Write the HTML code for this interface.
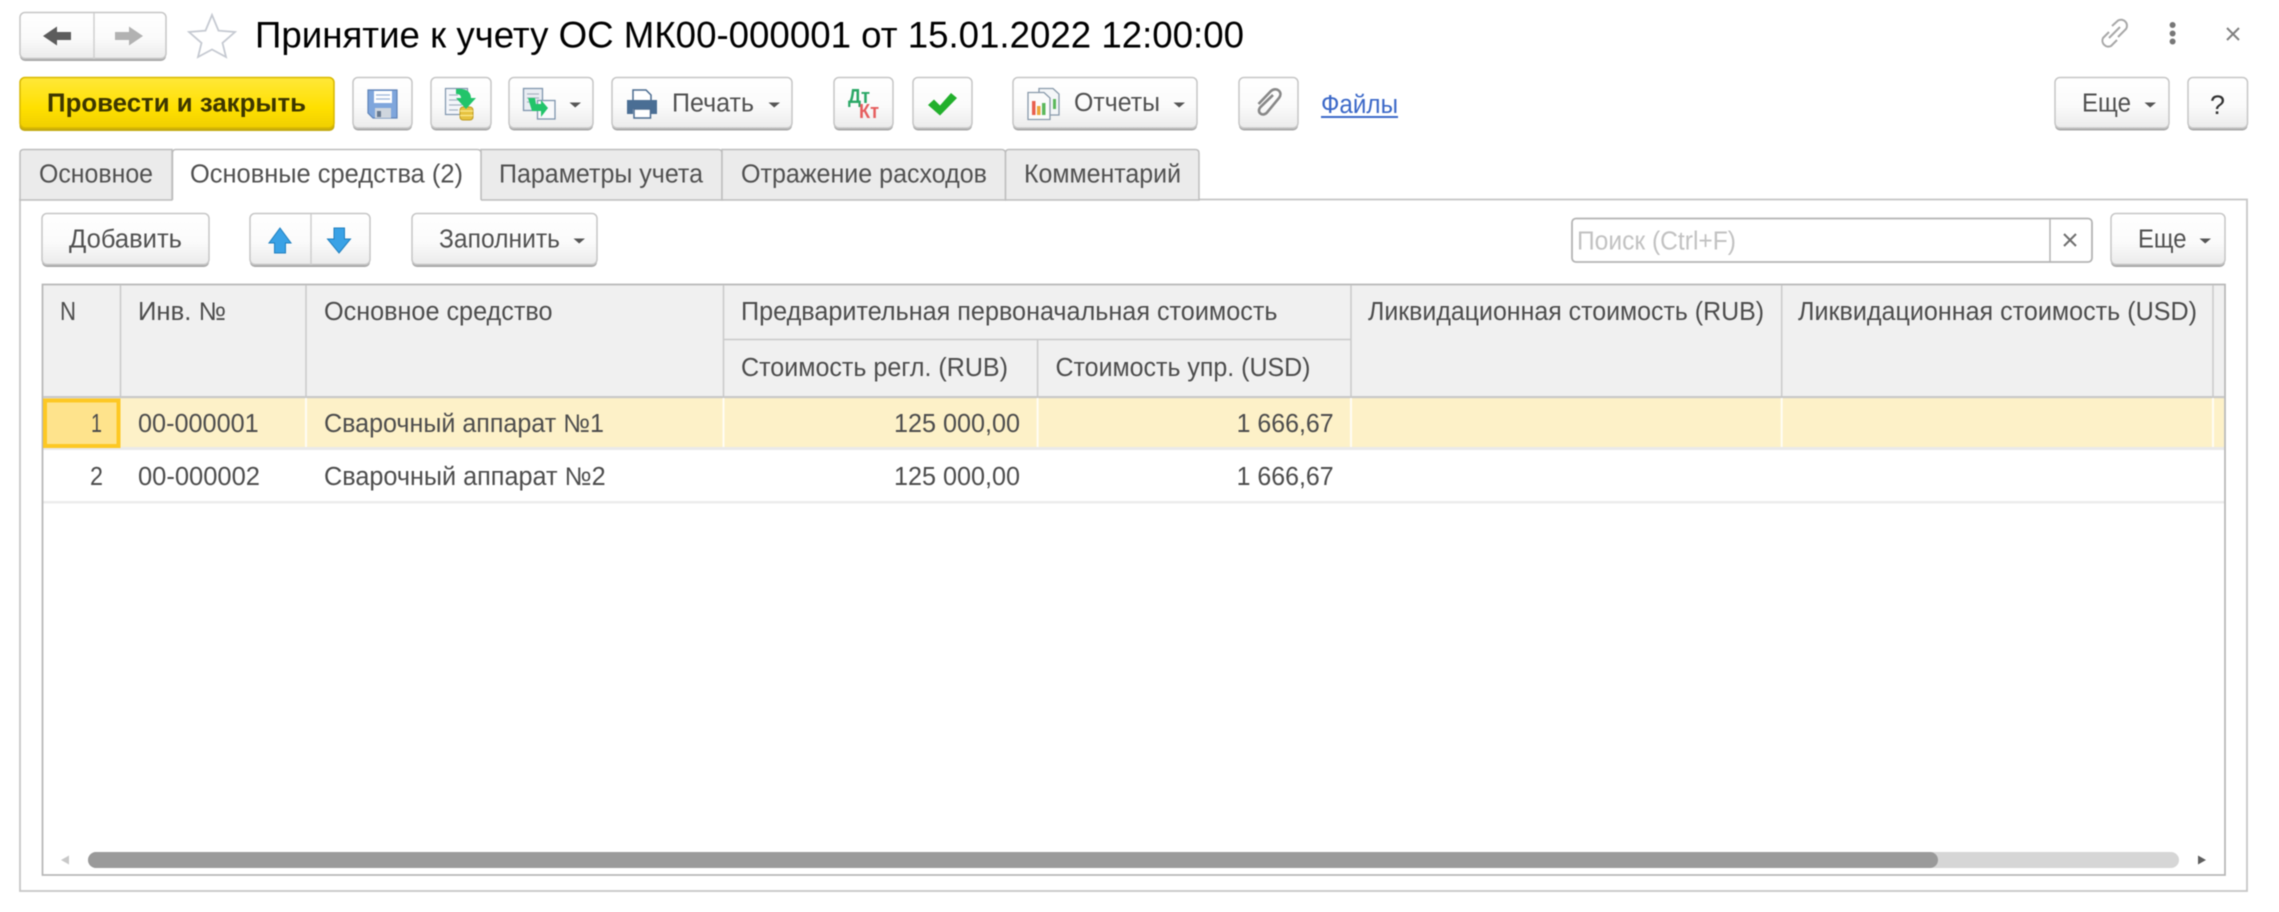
<!DOCTYPE html>
<html lang="ru"><head><meta charset="utf-8"><title>Принятие к учету</title>
<style>
html,body{margin:0;padding:0;background:#fff;width:2279px;height:912px;overflow:hidden}
svg{display:block;filter:blur(.55px)}
text{font-family:"Liberation Sans",sans-serif;fill:#4a4a4a;font-size:25.5px;white-space:pre}
.b{fill:url(#g);stroke:#c6c6c6;stroke-width:1.5}
.s{fill:#a8a8a8}
.t{fill:#505050}
.h{fill:#4c4c4c;font-size:25.5px}
.vl{stroke:#cacaca;stroke-width:1.5}
.wl{stroke:#fffdf5;stroke-width:2}
</style></head><body>
<svg width="2279" height="912" viewBox="0 0 2279 912" xmlns="http://www.w3.org/2000/svg">
<defs>
<linearGradient id="g" x1="0" y1="0" x2="0" y2="1"><stop offset="0" stop-color="#fff"/><stop offset=".55" stop-color="#fbfbfb"/><stop offset="1" stop-color="#ebebeb"/></linearGradient>
<linearGradient id="y" x1="0" y1="0" x2="0" y2="1"><stop offset="0" stop-color="#ffe83a"/><stop offset=".6" stop-color="#ffe000"/><stop offset="1" stop-color="#f0cf00"/></linearGradient>
</defs>
<rect width="2279" height="912" fill="#fff"/>

<!-- nav -->
<rect class="s" x="20" y="14" width="146" height="47" rx="5"/>
<rect class="b" x="20" y="12.5" width="146" height="46" rx="5"/>
<line x1="94" y1="13" x2="94" y2="59" stroke="#d0d0d0" stroke-width="1.5"/>
<path d="M43 36 L57 26.5 V32 H71 V40 H57 V45.5 Z" fill="#5c5c5c"/>
<path d="M143 36 L129 26.5 V32 H115 V40 H129 V45.5 Z" fill="#b2b2b2"/>
<path d="M212 15 L218.5 30.6 L235 32 L222.5 43 L226 57 L212 49.5 L198 57 L201.5 43 L189 32 L205.5 30.6 Z" fill="#fff" stroke="#c6cad2" stroke-width="1.8"/>

<text x="255" y="47.5" textLength="989" lengthAdjust="spacingAndGlyphs" style="font-size:37.5px;fill:#000">Принятие к учету ОС МК00-000001 от 15.01.2022 12:00:00</text>

<!-- top right -->
<g fill="none" stroke="#a8a8a8" stroke-width="2">
<path d="M2112 26 L2118 20.5 A6 6 0 0 1 2126 29 L2118 37"/>
<path d="M2109 32 L2103 38 A6 6 0 0 0 2111 46 L2117 40"/>
<path d="M2109 38 L2120 27"/>
</g>
<circle cx="2172.6" cy="25" r="3" fill="#777"/><circle cx="2172.6" cy="33.5" r="3" fill="#777"/><circle cx="2172.6" cy="41.5" r="3" fill="#777"/>
<path d="M2227 28 L2239 40 M2239 28 L2227 40" stroke="#808080" stroke-width="2"/>

<!-- toolbar -->
<rect x="19.5" y="79" width="315" height="52" rx="5" fill="#c4aa10"/>
<rect x="20" y="77.5" width="314" height="50.5" rx="5" fill="url(#y)" stroke="#d8b800" stroke-width="1.5"/>
<text x="47" y="111.5" textLength="259" lengthAdjust="spacingAndGlyphs" style="font-weight:bold;fill:#3d3600;font-size:26px">Провести и закрыть</text>

<rect class="s" x="353" y="79" width="59" height="51.5" rx="5"/><rect class="b" x="353" y="77.5" width="59" height="50.5" rx="5"/>
<rect class="s" x="431" y="79" width="60" height="51.5" rx="5"/><rect class="b" x="431" y="77.5" width="60" height="50.5" rx="5"/>
<rect class="s" x="509" y="79" width="84" height="51.5" rx="5"/><rect class="b" x="509" y="77.5" width="84" height="50.5" rx="5"/>
<rect class="s" x="612" y="79" width="180" height="51.5" rx="5"/><rect class="b" x="612" y="77.5" width="180" height="50.5" rx="5"/>
<rect class="s" x="834" y="79" width="59" height="51.5" rx="5"/><rect class="b" x="834" y="77.5" width="59" height="50.5" rx="5"/>
<rect class="s" x="913" y="79" width="59" height="51.5" rx="5"/><rect class="b" x="913" y="77.5" width="59" height="50.5" rx="5"/>
<rect class="s" x="1013" y="79" width="184" height="51.5" rx="5"/><rect class="b" x="1013" y="77.5" width="184" height="50.5" rx="5"/>
<rect class="s" x="1239" y="79" width="59" height="51.5" rx="5"/><rect class="b" x="1239" y="77.5" width="59" height="50.5" rx="5"/>
<rect class="s" x="2055" y="79" width="114" height="51.5" rx="5"/><rect class="b" x="2055" y="77.5" width="114" height="50.5" rx="5"/>
<rect class="s" x="2188" y="79" width="59.5" height="51.5" rx="5"/><rect class="b" x="2188" y="77.5" width="59.5" height="50.5" rx="5"/>

<!-- save icon -->
<path d="M368 90 H397 V118 H373 L368 113 Z" fill="#7fa6dc" stroke="#5f84b8" stroke-width="1.2"/>
<rect x="374" y="91" width="18" height="12" fill="#fff"/>
<path d="M376 95 H390 M376 99 H390" stroke="#9ab4d8" stroke-width="1.3"/>
<rect x="375" y="108" width="16" height="10" fill="#cfd6de"/><rect x="377" y="111" width="4" height="6" fill="#66788f"/>

<!-- post icon -->
<rect x="445.5" y="88.5" width="22" height="26" fill="#f4f6fa" stroke="#7f95ad" stroke-width="1.2"/>
<path d="M449 95 H458 M449 100 H462 M449 105 H462 M449 110 H458" stroke="#a8b4c2" stroke-width="1.3"/>
<rect x="460" y="107" width="13" height="13" rx="3" fill="#e6c23f" stroke="#bd9a22"/>
<path d="M460 111 H473 M460 115.500 H473" stroke="#fbe98d" stroke-width="1.3"/>
<path d="M456 89 C465 88 471 91 471 98 H476 L466 109 L456 98 H461 C461 95 459 94 456 94 Z" fill="#22c46a"/>

<!-- copy icon -->
<rect x="523.5" y="88.5" width="19" height="22" fill="#e9edf3" stroke="#7f95ad" stroke-width="1.3"/>
<path d="M527 94 H539 M527 98 H539 M527 102 H533" stroke="#a8b4c2" stroke-width="1.2"/>
<rect x="537.5" y="100.5" width="17.5" height="18.5" fill="#f8f9fb" stroke="#7f95ad" stroke-width="1.3"/>
<path d="M528 98 L535 98 L536 104 L541 104 L541 100 L548 108 L541 117 L541 111 L532 111 Z" fill="#22c46a"/>
<path d="M569.5 102.5 H581 L575.2 107.5 Z" fill="#555"/>

<!-- printer -->
<path d="M633 90 H646 L651 95 V103 H633 Z" fill="#fff" stroke="#4a6b90" stroke-width="1.5"/>
<path d="M627 100 H657 V114 H651 V109 H633 V114 H627 Z" fill="#4a6e94"/>
<rect x="634" y="109" width="16.5" height="9" fill="#fff" stroke="#4a6b90" stroke-width="1.5"/>
<text x="672" y="111.5" textLength="82" lengthAdjust="spacingAndGlyphs" class="t">Печать</text>
<path d="M768.5 102.5 H780 L774.2 107.5 Z" fill="#555"/>

<!-- dt kt -->
<text x="848" y="103" textLength="22" lengthAdjust="spacingAndGlyphs" style="font-size:20px;font-weight:bold;fill:#2aa866">Дт</text>
<text x="859" y="118" textLength="20" lengthAdjust="spacingAndGlyphs" style="font-size:20px;font-weight:bold;fill:#e65e5e">Кт</text>
<!-- check -->
<path d="M928 105 L934 99.5 L940 105.5 L951 93 L957 98 L940 115.5 Z" fill="#22b02c"/>

<!-- reports -->
<path d="M1039 88.5 H1053 L1059 94 V115 H1039 Z" fill="#f4f6f8" stroke="#8899aa" stroke-width="1.3"/>
<path d="M1028 92.5 H1044 L1050 98 V119.5 H1028 Z" fill="#fbfbfb" stroke="#8899aa" stroke-width="1.3"/>
<rect x="1032" y="101" width="3.5" height="14" fill="#e8604e"/><rect x="1037" y="106" width="3.5" height="9" fill="#eda63a"/><rect x="1042" y="103" width="3.5" height="12" fill="#5cb85c"/><rect x="1053" y="99" width="3" height="10" fill="#5cb85c"/>
<text x="1074" y="111" textLength="86" lengthAdjust="spacingAndGlyphs" class="t">Отчеты</text>
<path d="M1173.5 102.5 H1185 L1179.2 107.5 Z" fill="#555"/>

<!-- clip -->
<path d="M1273 95 L1260.5 107 C1256 112 1262.500 117.500 1267 112.500 L1279 98 C1283.500 92 1276.500 86.500 1271 91 L1258.500 104" fill="none" stroke="#888" stroke-width="2.6"/>

<text x="1321" y="113" textLength="77" lengthAdjust="spacingAndGlyphs" style="fill:#3b68c8">Файлы</text>
<rect x="1321" y="116" width="77" height="2" fill="#3b68c8"/>

<text x="2082" y="111.5" textLength="49" lengthAdjust="spacingAndGlyphs" class="t">Еще</text>
<path d="M2144.500 102.500 H2156 L2150.200 107.500 Z" fill="#555"/>
<text x="2210" y="114" textLength="15" lengthAdjust="spacingAndGlyphs" style="fill:#333;font-size:27px">?</text>

<!-- tabs & panel -->
<rect x="20" y="199.500" width="2227" height="691.500" fill="#fff" stroke="#c6c6c6" stroke-width="1.800"/>
<path d="M20 200 V153 Q20 149.500 24 149.500 H172 V200 Z" fill="#ebebeb" stroke="#bdbdbd" stroke-width="1.500"/>
<path d="M481 200 V149.500 H718 Q722 149.500 722 153 V200 Z" fill="#ebebeb" stroke="#bdbdbd" stroke-width="1.500"/>
<path d="M722 200 V149.500 H1001 Q1005.500 149.500 1005.500 153 V200 Z" fill="#ebebeb" stroke="#bdbdbd" stroke-width="1.500"/>
<path d="M1005.500 200 V153 Q1005.500 149.500 1009 149.500 H1195 Q1199 149.500 1199 153 V200 Z" fill="#ebebeb" stroke="#bdbdbd" stroke-width="1.500"/>
<path d="M172.500 202 V153 Q172.500 149.500 176 149.500 H477 Q481 149.500 481 153 V202 Z" fill="#fff"/>
<path d="M172.500 200 V153 Q172.500 149.500 176 149.500 H477 Q481 149.500 481 153 V200" fill="none" stroke="#bdbdbd" stroke-width="1.500"/>
<text x="39" y="182.500" textLength="114" lengthAdjust="spacingAndGlyphs" class="t">Основное</text>
<text x="190" y="182.500" textLength="273" lengthAdjust="spacingAndGlyphs" class="t">Основные средства (2)</text>
<text x="499" y="182.500" textLength="204" lengthAdjust="spacingAndGlyphs" class="t">Параметры учета</text>
<text x="741" y="182.500" textLength="246" lengthAdjust="spacingAndGlyphs" class="t">Отражение расходов</text>
<text x="1024" y="182.500" textLength="157" lengthAdjust="spacingAndGlyphs" class="t">Комментарий</text>

<!-- row 3 buttons -->
<rect class="s" x="42" y="215" width="167" height="52" rx="5"/><rect class="b" x="42" y="213.500" width="167" height="51" rx="5"/>
<text x="69" y="247.500" textLength="113" lengthAdjust="spacingAndGlyphs" class="t">Добавить</text>
<rect class="s" x="250" y="215" width="120" height="52" rx="5"/><rect class="b" x="250" y="213.500" width="120" height="51" rx="5"/>
<line x1="311" y1="214" x2="311" y2="265" stroke="#cfcfcf" stroke-width="1.500"/>
<path d="M280 228 L291 243 H285.500 V253 H274.500 V243 H269 Z" fill="#3aa2e6" stroke="#1f7fbf" stroke-width="1"/>
<path d="M339 253 L350.500 239 H344.500 V228 H334 V239 H327.500 Z" fill="#3aa2e6" stroke="#1f7fbf" stroke-width="1"/>
<rect class="s" x="412" y="215" width="185" height="52" rx="5"/><rect class="b" x="412" y="213.500" width="185" height="51" rx="5"/>
<text x="439" y="247.500" textLength="121" lengthAdjust="spacingAndGlyphs" class="t">Заполнить</text>
<path d="M573.500 238.500 H585 L579.200 243.500 Z" fill="#555"/>

<rect x="1572" y="218.500" width="520" height="43.500" rx="4" fill="#fff" stroke="#b4b4b4" stroke-width="1.800"/>
<line x1="2050" y1="219" x2="2050" y2="262" stroke="#b4b4b4" stroke-width="1.500"/>
<text x="1577" y="249.500" textLength="159" lengthAdjust="spacingAndGlyphs" style="fill:#c2c2c2">Поиск (Ctrl+F)</text>
<path d="M2064 234 L2076 246 M2076 234 L2064 246" stroke="#6e6e6e" stroke-width="2"/>
<rect class="s" x="2111" y="215" width="114" height="52" rx="5"/><rect class="b" x="2111" y="213.500" width="114" height="51" rx="5"/>
<text x="2138" y="247.500" textLength="48.500" lengthAdjust="spacingAndGlyphs" class="t">Еще</text>
<path d="M2199.500 238.500 H2211 L2205.200 243.500 Z" fill="#555"/>

<!-- table -->
<rect x="43" y="285" width="2181" height="112" fill="#f0f0f0"/>
<rect x="43" y="398" width="2181" height="49" fill="#fdf1c8"/>
<rect x="43" y="447" width="2181" height="3" fill="#e9e9e9"/>
<rect x="43" y="501" width="2181" height="2.500" fill="#ececec"/>
<rect x="42.500" y="284.500" width="2182.500" height="590.500" fill="none" stroke="#b6b6b6" stroke-width="1.700"/>
<rect x="43" y="396" width="2181" height="2.200" fill="#c8c8c8"/>
<line class="vl" x1="120.500" y1="285" x2="120.500" y2="396"/>
<line class="vl" x1="306" y1="285" x2="306" y2="396"/>
<line class="vl" x1="723.500" y1="285" x2="723.500" y2="396"/>
<line class="vl" x1="1037.600" y1="340" x2="1037.600" y2="396"/>
<line class="vl" x1="1351" y1="285" x2="1351" y2="396"/>
<line class="vl" x1="1781.700" y1="285" x2="1781.700" y2="396"/>
<line class="vl" x1="2213" y1="285" x2="2213" y2="396"/>
<line class="vl" x1="723.500" y1="339.500" x2="1351" y2="339.500"/>
<line class="wl" x1="306" y1="398" x2="306" y2="447"/>
<line class="wl" x1="723.500" y1="398" x2="723.500" y2="447"/>
<line class="wl" x1="1037.600" y1="398" x2="1037.600" y2="447"/>
<line class="wl" x1="1351" y1="398" x2="1351" y2="447"/>
<line class="wl" x1="1781.700" y1="398" x2="1781.700" y2="447"/>
<line class="wl" x1="2213" y1="398" x2="2213" y2="447"/>
<rect x="45" y="400.500" width="73.500" height="45.500" fill="#fee38c" stroke="#fdc823" stroke-width="4"/>

<text x="60" y="320" textLength="16" lengthAdjust="spacingAndGlyphs" class="h">N</text>
<text x="138" y="320" textLength="88" lengthAdjust="spacingAndGlyphs" class="h">Инв. №</text>
<text x="324" y="320" textLength="228.500" lengthAdjust="spacingAndGlyphs" class="h">Основное средство</text>
<text x="741" y="320" textLength="536.500" lengthAdjust="spacingAndGlyphs" class="h">Предварительная первоначальная стоимость</text>
<text x="741" y="376" textLength="267" lengthAdjust="spacingAndGlyphs" class="h">Стоимость регл. (RUB)</text>
<text x="1055.500" y="376" textLength="255" lengthAdjust="spacingAndGlyphs" class="h">Стоимость упр. (USD)</text>
<text x="1368" y="320" textLength="396" lengthAdjust="spacingAndGlyphs" class="h">Ликвидационная стоимость (RUB)</text>
<text x="1798" y="320" textLength="399" lengthAdjust="spacingAndGlyphs" class="h">Ликвидационная стоимость (USD)</text>

<text x="91" y="432" textLength="11" lengthAdjust="spacingAndGlyphs" class="h">1</text>
<text x="138" y="432" textLength="120.700" lengthAdjust="spacingAndGlyphs" class="h">00-000001</text>
<text x="324" y="432" textLength="280" lengthAdjust="spacingAndGlyphs" class="h">Сварочный аппарат №1</text>
<text x="894" y="432" textLength="126" lengthAdjust="spacingAndGlyphs" class="h">125 000,00</text>
<text x="1236.600" y="432" textLength="97" lengthAdjust="spacingAndGlyphs" class="h">1 666,67</text>
<text x="90" y="485" textLength="13" lengthAdjust="spacingAndGlyphs" class="h">2</text>
<text x="138" y="485" textLength="122" lengthAdjust="spacingAndGlyphs" class="h">00-000002</text>
<text x="324" y="485" textLength="281.600" lengthAdjust="spacingAndGlyphs" class="h">Сварочный аппарат №2</text>
<text x="894" y="485" textLength="126" lengthAdjust="spacingAndGlyphs" class="h">125 000,00</text>
<text x="1236.600" y="485" textLength="97" lengthAdjust="spacingAndGlyphs" class="h">1 666,67</text>

<!-- scrollbar -->
<path d="M69 855.500 V864.500 L61 860 Z" fill="#c8c8c8"/>
<rect x="88" y="852" width="2091" height="16" rx="8" fill="#d6d6d6"/>
<rect x="88" y="852" width="1850" height="16" rx="8" fill="#9a9a9a"/>
<path d="M2198 855.500 V864.500 L2206 860 Z" fill="#5e5e5e"/>
</svg>
</body></html>
